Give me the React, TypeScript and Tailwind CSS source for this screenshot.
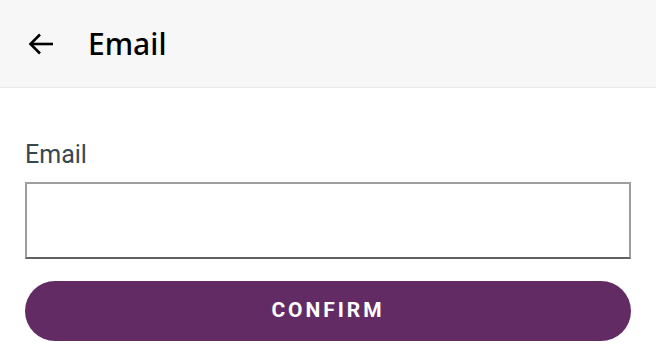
export default function App() {
  return (
    <div className="min-h-screen w-full bg-white font-['Roboto',sans-serif]">
      <header className="flex h-[88px] items-center border-b border-[#ebebeb] bg-[#f7f7f7] px-[28px]">
        <button aria-label="Back" className="flex h-[26px] w-[26px] items-center justify-center text-black">
          <svg width="26" height="22" viewBox="0 0 26 22" fill="none" stroke="currentColor" strokeWidth="2.6">
            <path d="M3 11H25" />
            <path d="M12 1.5L2.5 11l9.5 9.5" strokeLinejoin="miter" />
          </svg>
        </button>
        <h1 className="ml-[34px] font-['Noto_Sans',sans-serif] text-[30px] font-medium text-black">Email</h1>
      </header>

      <main className="px-[25px] pt-[52px]">
        <label className="block text-[25px] leading-[30px] text-[#37474f]">Email</label>
        <input
          type="email"
          className="mt-[12px] block h-[77px] w-full border-2 border-[#9e9e9e] border-b-[#616161] bg-white px-3 outline-none"
        />
        <button className="mt-[22px] flex h-[60px] w-full items-center justify-center rounded-full bg-[#622b63] text-[21px] font-bold tracking-[0.14em] text-white">
          CONFIRM
        </button>
      </main>
    </div>
  );
}
